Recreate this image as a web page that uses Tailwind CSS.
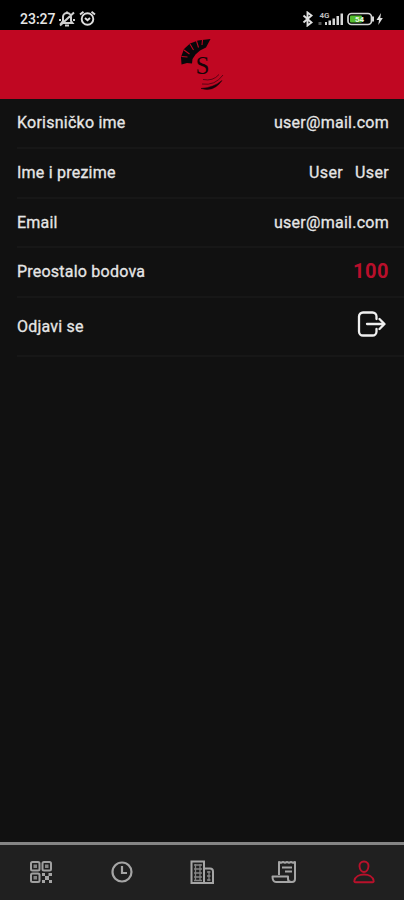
<!DOCTYPE html>
<html lang="hr">
<head>
<meta charset="utf-8">
<meta name="viewport" content="width=device-width, initial-scale=1">
<title>Profil</title>
<script src="https://cdn.jsdelivr.net/npm/@tailwindcss/browser@4"></script>
</head>
<body class="bg-[#111111]">
<div class="flex h-[900px] w-[404px] flex-col overflow-hidden bg-[#111111] font-['Roboto',sans-serif] text-[16px] text-[#e6e6e6]">
  <div class="flex h-[30px] shrink-0 items-center justify-between bg-black pt-[7px] pr-[20px] pl-[20px]">
    <div class="flex items-center">
      <span class="w-[38px] text-[14px] leading-[16px] font-medium">23:27</span>
      <svg class="h-[18px] w-[18px]" viewBox="0 0 18 18" fill="none" stroke="#d0d0d0" stroke-width="2"><path d="M3.500 13h11L13 11V7a4 4 0 0 0-8 0v4zM7 15.500h4M9 3V1.500M2 15.500 16 2.500M1 10h2M15 10h2"/></svg>
      <svg class="ml-[3px] h-[17px] w-[17px]" viewBox="0 0 17 17" fill="none" stroke="#dedede" stroke-width="1.900"><circle cx="8.500" cy="9" r="5.800"/><path d="M1 4.500 4.500 1.700M16 4.500l-3.500-2.800M6 8l2.500 2.200L11 8"/></svg>
    </div>
    <div class="flex items-center">
      <svg class="h-[16px] w-[84px]" viewBox="300 11 84 16" fill="none">
        <path d="m303.500 15.500 8 7-4 3V12.500l4 3-8 7" stroke="#e0e0e0" stroke-width="1.900"/>
        <text x="319.500" y="18" font-size="8" font-weight="700" fill="#bdbdbd" textLength="10">4G</text>
        <path d="M318.500 22h3v3h-3z" fill="#555"/>
        <path d="M325 22h2v3h-2zM328.500 20.500h2.500V25h-2.500zM332.500 18.500h2.500V25h-2.500zM336.500 16h2.500v9h-2.500zM340.500 13.500h2.500V25h-2.500z" fill="#d6d6d6"/>
        <rect x="348" y="13.500" width="23.500" height="11" rx="3.500" stroke="#d6d6d6" stroke-width="1.700"/>
        <rect x="350" y="15.500" width="12" height="7" rx="1" fill="#55bd2e"/>
        <text x="355" y="22" font-size="8" font-weight="700" fill="#e9f5e4">54</text>
        <path d="M373 16.500v5" stroke="#d6d6d6" stroke-width="2"/>
        <path d="m381 13-4.500 7h2.500l-.7 5 4.500-7h-2.500z" fill="#e0e0e0"/>
      </svg>
    </div>
  </div>

  <header class="flex h-[69px] shrink-0 justify-center bg-[#c00722]">
    <svg class="h-[68px] w-[60px]" viewBox="172 30 60 68" fill="none">
      <path d="M181.500 64.500 181 57 184 49 190 43.500 198 40.500 210.500 39 206 47.500 200 50.500 195.500 54.500 192.500 59 192 63.500 187 63z" fill="#08080a"/>
      <path d="m181.500 56.500 6 .5M184 50l5.500 4M190 44l3.500 6M196.500 41l2 6.500M202.500 40l-.5 5" stroke="#c00722" stroke-width="1.100"/>
      <text x="195.500" y="74" font-family="'Liberation Serif', serif" font-size="26" textLength="14" lengthAdjust="spacingAndGlyphs" fill="#150408">S</text>
      <path d="M203 79.500q10 2 16-5M202 84q13 2 21-9" stroke="#5c0414" stroke-width="1"/>
      <path d="M201 88.500q13 4 21-8-8 7-21 8z" fill="#16040a" stroke="#16040a" stroke-width=".5"/>
    </svg>
  </header>

  <main class="flex grow flex-col pl-[17px] [-webkit-text-stroke:0.3px_currentColor]">
    <div class="flex h-[50px] items-center justify-between border-b-2 border-[#171717] pr-[15px]"><span class="tracking-[0.24px]">Korisničko ime</span><span class="tracking-[0.26px]">user@mail.com</span></div>
    <div class="flex h-[50px] items-center justify-between border-b-2 border-[#171717] pr-[15px]"><span class="tracking-[0.22px]">Ime i prezime</span><span class="flex gap-[12px] tracking-[0.35px]"><span>User</span><span>User</span></span></div>
    <div class="flex h-[49px] items-center justify-between border-b-2 border-[#171717] pr-[15px]"><span class="tracking-[0.2px]">Email</span><span class="tracking-[0.26px]">user@mail.com</span></div>
    <div class="flex h-[50px] items-center justify-between border-b-2 border-[#171717] pr-[15px]"><span class="tracking-[0.22px]">Preostalo bodova</span><span class="mb-[2px] text-[20px] font-bold tracking-[0.5px] text-[#b90f2b] [-webkit-text-stroke:0]">100</span></div>
    <div class="flex h-[59px] items-center justify-between border-b-2 border-[#171717] pr-[18px]"><span class="tracking-[0.2px]">Odjavi se</span>
      <svg class="mb-[6px] h-[26px] w-[30px]" viewBox="0 0 30 26" fill="none" stroke="#f0f0f0" stroke-width="2.300" stroke-linecap="round" stroke-linejoin="round"><path d="M20.500 8V5.500a4 4 0 0 0-4-4H7a4 4 0 0 0-4 4v15a4 4 0 0 0 4 4h9.500a4 4 0 0 0 4-4V18M11 13h17M23.500 8l5 5-5 5"/></svg>
    </div>
  </main>

  <nav class="grid h-[58px] shrink-0 grid-cols-5 border-t-[3px] border-[#858585] bg-[#202020] pt-[14px] pl-[1px]">
    <div class="flex justify-center">
      <svg class="h-[26px] w-[26px]" viewBox="0 0 26 26" fill="none" stroke="#a0a0a0" stroke-width="2"><rect x="3" y="3" width="8.500" height="8.500" rx="1.500"/><rect x="14.500" y="3" width="8.500" height="8.500" rx="1.500"/><rect x="3" y="14.500" width="8.500" height="8.500" rx="1.500"/><path d="M5.500 5.500H9V9H5.500zM17 5.500h3.500V9H17zM5.500 17H9v3.500H5.500z" fill="#858585" stroke="none"/><path d="M14 14h3v3h-3zM20.500 14H24v3h-3.500zM17 17h4v4h-4zM14 21h3v3h-3zM21 21h3v3h-3z" fill="#a5a5a5" stroke="none"/></svg>
    </div>
    <div class="flex justify-center">
      <svg class="h-[26px] w-[26px]" viewBox="0 0 26 26" fill="none" stroke="#a5a5a5" stroke-width="2.200"><circle cx="13" cy="13" r="9.500"/><path d="M13 7v7h5"/></svg>
    </div>
    <div class="flex justify-center">
      <svg class="h-[26px] w-[26px]" viewBox="0 0 26 26" fill="none" stroke="#a5a5a5" stroke-width="2"><path d="M2.500 24V2.500h12.500V24M15 9.500h6q3 0 3 3V24M1.500 24H25"/><path d="M5 6h8M5 10h8M5 14h8M5 18h8M5 21.500h8M18 13h3.500M18 17h3.500M18 21h3.500" stroke="#858585" stroke-width="1.500"/><path d="M6.500 5v17M11 5v17M20 12v10" stroke="#858585" stroke-width="1.300"/></svg>
    </div>
    <div class="flex justify-center">
      <svg class="ml-[2px] h-[26px] w-[26px]" viewBox="0 0 26 26" fill="none" stroke="#a5a5a5" stroke-width="2" stroke-linejoin="round"><path d="M8 16V3l2 .7L12 3l2 .7L16 3l2 .7L20 3l2 .7L24 3v17a3 3 0 0 1-3 3H5q-3.500 0-3.500-5.500H17V20q0 3 3.500 3M11 8.500h10M14 12.500h7"/></svg>
    </div>
    <div class="flex justify-center">
      <svg class="ml-[1px] h-[26px] w-[26px]" viewBox="0 0 26 26" fill="none" stroke="#b9112b" stroke-width="1.900"><path d="M13 2.500c-3 0-4.700 2-4.500 4.800.2 3.200 2.200 5.700 4.500 5.700s4.300-2.500 4.500-5.700c.2-2.800-1.500-4.800-4.500-4.800zM13 15.500c-4.500 0-8.800 2.200-9.700 6.200-.2.800.2 1.500 1.200 1.500h17c1 0 1.400-.7 1.200-1.500-.9-4-5.200-6.200-9.700-6.200z"/></svg>
    </div>
  </nav>
</div>
</body>
</html>
